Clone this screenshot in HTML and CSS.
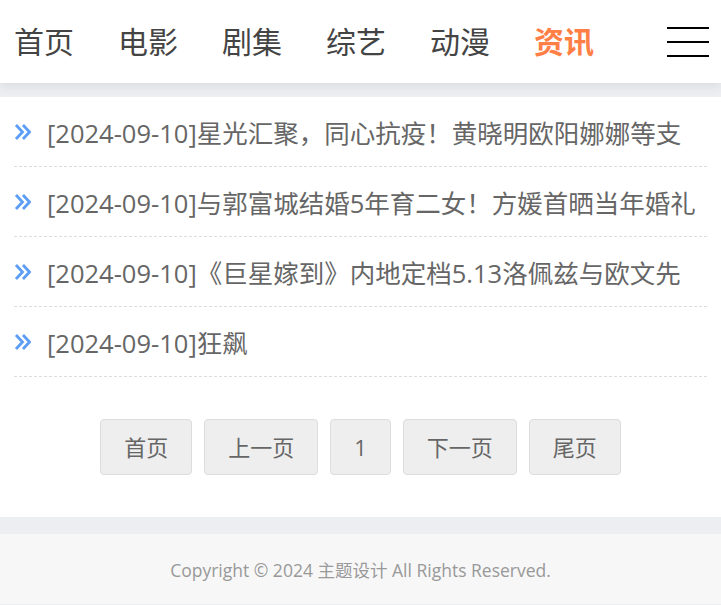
FILE: index.html
```html
<!DOCTYPE html>
<html lang="zh-CN">
<head>
    <meta charset="UTF-8">
    <meta name="viewport" content="width=device-width, initial-scale=1.0">
    <title>资讯</title>
    <link rel="stylesheet" href="styles.css">
</head>
<body>
    <header class="header">
        <nav class="nav">
            <a href="#">首页</a>
            <a href="#">电影</a>
            <a href="#">剧集</a>
            <a href="#">综艺</a>
            <a href="#">动漫</a>
            <a href="#" class="active">资讯</a>
        </nav>
        <div class="menu-btn">
            <span></span>
            <span></span>
            <span></span>
        </div>
    </header>

    <main class="main">
        <ul class="news-list">
            <li>
                <svg class="arrow" width="17" height="18" viewBox="0 0 17 18" fill="none" stroke="#5c9df5" stroke-width="2.8"><path d="M2 2l6.5 7-6.5 7M9 2l6.5 7-6.5 7"/></svg>
                <a href="#">[2024-09-10]星光汇聚，同心抗疫！黄晓明欧阳娜娜等支</a>
            </li>
            <li>
                <svg class="arrow" width="17" height="18" viewBox="0 0 17 18" fill="none" stroke="#5c9df5" stroke-width="2.8"><path d="M2 2l6.5 7-6.5 7M9 2l6.5 7-6.5 7"/></svg>
                <a href="#">[2024-09-10]与郭富城结婚5年育二女！方媛首晒当年婚礼</a>
            </li>
            <li>
                <svg class="arrow" width="17" height="18" viewBox="0 0 17 18" fill="none" stroke="#5c9df5" stroke-width="2.8"><path d="M2 2l6.5 7-6.5 7M9 2l6.5 7-6.5 7"/></svg>
                <a href="#">[2024-09-10]《巨星嫁到》内地定档5.13洛佩兹与欧文先</a>
            </li>
            <li>
                <svg class="arrow" width="17" height="18" viewBox="0 0 17 18" fill="none" stroke="#5c9df5" stroke-width="2.8"><path d="M2 2l6.5 7-6.5 7M9 2l6.5 7-6.5 7"/></svg>
                <a href="#">[2024-09-10]狂飙</a>
            </li>
        </ul>

        <div class="pager">
            <a href="#">首页</a>
            <a href="#">上一页</a>
            <a href="#">1</a>
            <a href="#">下一页</a>
            <a href="#">尾页</a>
        </div>
    </main>

    <footer class="footer">
        Copyright © 2024 主题设计 All Rights Reserved.
    </footer>
</body>
</html>
```

FILE: styles.css
```css
* {
    margin: 0;
    padding: 0;
    box-sizing: border-box;
}

body {
    font-family: "Open Sans", "Noto Sans CJK SC", sans-serif;
    background: #edeef2;
    color: #666;
}

a {
    text-decoration: none;
    color: inherit;
}

.header {
    background: white;
    height: 83px;
    display: flex;
    align-items: center;
    justify-content: space-between;
    padding: 0 12px 0 14px;
    box-shadow: 0 3px 10px rgba(0,0,0,0.08);
    position: relative;
}

.nav {
    display: flex;
    gap: 44px;
}

.nav a {
    font-size: 30px;
    color: #444;
    line-height: 1;
}

.nav a.active {
    color: #ff7f46;
    font-weight: bold;
}

.menu-btn {
    width: 42px;
    display: flex;
    flex-direction: column;
    gap: 12px;
}

.menu-btn span {
    display: block;
    height: 2px;
    background: #000;
}

.main {
    background: white;
    margin-top: 14px;
    padding: 0 14px 42px;
}

.news-list {
    list-style: none;
}

.news-list li {
    height: 70px;
    display: flex;
    align-items: center;
    border-bottom: 1px dashed #ddd;
    white-space: nowrap;
    overflow: hidden;
}

.news-list .arrow {
    flex-shrink: 0;
    margin-right: 16px;
}

.news-list a {
    font-size: 25.5px;
    color: #666;
}

.pager {
    display: flex;
    justify-content: center;
    gap: 12px;
    margin-top: 42px;
}

.pager a {
    height: 56px;
    line-height: 54px;
    padding: 0 23px;
    background: #eee;
    border: 1px solid #ddd;
    border-radius: 4px;
    font-size: 22px;
    color: #666;
}

.footer {
    background: #f7f7f7;
    margin-top: 17px;
    height: 70px;
    line-height: 72px;
    text-align: center;
    font-size: 17.5px;
    color: #999;
}
```
